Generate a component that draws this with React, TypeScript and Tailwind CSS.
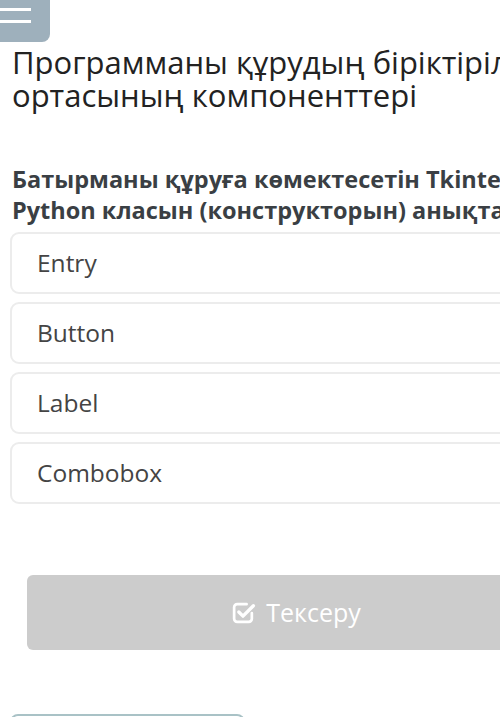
import React from "react";

const options = ["Entry", "Button", "Label", "Combobox"];

export default function App() {
  return (
    <div className="w-[500px] h-[717px] overflow-hidden bg-white" style={{ fontFamily: '"Open Sans", "Noto Sans", sans-serif' }}>
      <div className="w-[582px]">
        <div className="w-[50px] h-[46px] bg-[#9eb0bc] rounded-br-[8px] flex flex-col gap-[9px] pt-0 -mt-[4px]">
          <div className="w-[31px] h-[3px] bg-white"></div>
          <div className="w-[31px] h-[3px] bg-white"></div>
          <div className="w-[31px] h-[3px] bg-white"></div>
        </div>
        <h1 className="pl-[12px] mt-[4px] text-[31px] leading-[33px] text-[#222] font-normal whitespace-nowrap">
          Программаны құрудың біріктірілген
          <br />
          ортасының компоненттері
        </h1>
        <p className="pl-[12px] mt-[52px] text-[23.5px] leading-[31px] font-bold text-[#3a3f44] whitespace-nowrap">
          Батырманы құруға көмектесетін Tkinter
          <br />
          Python класын (конструкторын) анықтаңыз.
        </p>
        <div className="ml-[10px] mt-[6px] flex flex-col gap-[8px]">
          {options.map((o) => (
            <div
              key={o}
              className="h-[62px] border-2 border-[#ececec] rounded-[9px] flex items-center pl-[25px] text-[24.5px] text-[#444]"
            >
              {o}
            </div>
          ))}
        </div>
        <div className="ml-[27px] mr-[17px] mt-[71px] h-[75px] bg-[#cccccc] rounded-[6px] flex items-center justify-center gap-[10px] text-white text-[25px]">
          <svg width="25" height="25" viewBox="0 0 24 24" fill="none" stroke="#ffffff" strokeWidth="2.6" strokeLinecap="round" strokeLinejoin="round">
            <path d="M20 12.5V18a3 3 0 0 1-3 3H6a3 3 0 0 1-3-3V7a3 3 0 0 1 3-3h9" />
            <path d="M7.5 11.5l4 4L21.5 5.5" strokeWidth="3.2" />
          </svg>
          <span>Тексеру</span>
        </div>
        <div className="ml-[10px] mt-[64px] w-[235px] h-[20px] border-2 border-[#a9c2c6] rounded-[8px]"></div>
      </div>
    </div>
  );
}
